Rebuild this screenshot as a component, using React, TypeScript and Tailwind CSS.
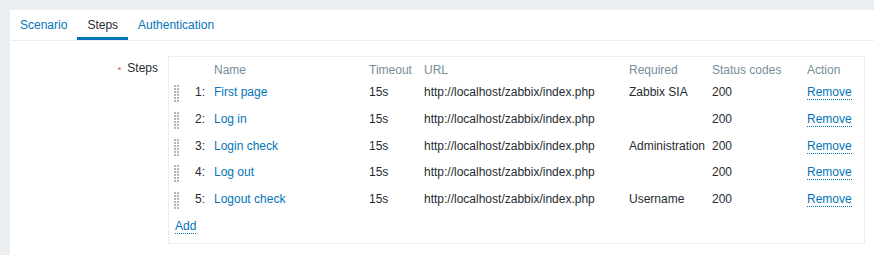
import React from "react";

const steps = [
  { no: 1, name: "First page", timeout: "15s", url: "http://localhost/zabbix/index.php", required: "Zabbix SIA", status: "200" },
  { no: 2, name: "Log in", timeout: "15s", url: "http://localhost/zabbix/index.php", required: "", status: "200" },
  { no: 3, name: "Login check", timeout: "15s", url: "http://localhost/zabbix/index.php", required: "Administration", status: "200" },
  { no: 4, name: "Log out", timeout: "15s", url: "http://localhost/zabbix/index.php", required: "", status: "200" },
  { no: 5, name: "Logout check", timeout: "15s", url: "http://localhost/zabbix/index.php", required: "Username", status: "200" },
];

const cols = "grid grid-cols-[16px_25px_155px_55px_205px_83px_95px_47px]";

const DragHandle = () => (
  <svg width="5" height="17" viewBox="0 0 5 17" className="block">
    {[0, 1, 2, 3, 4, 5].map((r) => (
      <g key={r} fill="#b0b8bd">
        <rect x="0" y={r * 3} width="2" height="2" />
        <rect x="3" y={r * 3} width="2" height="2" />
      </g>
    ))}
  </svg>
);

const App = () => {
  const tabs = ["Scenario", "Steps", "Authentication"];

  return (
    <div className="h-[255px] overflow-hidden bg-[#ebeef0] pl-[10px] pt-[10px] font-['Liberation_Sans',Arial,sans-serif] text-[12px] leading-[14px] text-[#1f2c33]">
      <div className="h-[245px] bg-white">
        {/* tab bar */}
        <div className="flex h-[31px] border-b border-[#ebeef0]">
          {tabs.map((t) => (
            <div
              key={t}
              className={
                t === "Steps"
                  ? "h-[30px] border-b-[3px] border-[#0275b8] px-[10px] pt-[8px] text-[#1f2c33]"
                  : "h-[30px] border-b-[3px] border-transparent px-[10px] pt-[8px] text-[#0275b8]"
              }
            >
              {t}
            </div>
          ))}
        </div>

        {/* form row */}
        <div className="flex gap-[10px] pt-[15px]">
          <div className="w-[148px] pt-[5px] text-right">
            <span className="mr-[6px] align-[-1px] text-[9px] text-[#e33734]">*</span>
            Steps
          </div>

          <div className="h-[188px] w-[697px] border border-[#ebeef0] pl-[4px] pr-[10px] pt-[6px]">
            <div className={`${cols} h-[15.7px] text-[#768d99]`}>
              <div />
              <div />
              <div>Name</div>
              <div>Timeout</div>
              <div>URL</div>
              <div>Required</div>
              <div>Status codes</div>
              <div>Action</div>
            </div>

            {steps.map((s) => (
              <div key={s.no} className={`${cols} h-[26.8px] items-center`}>
                <div className="pl-[1px] pt-[3px]">
                  <DragHandle />
                </div>
                <div className="pr-[9px] text-right">{s.no}:</div>
                <div className="text-[#0275b8]">{s.name}</div>
                <div>{s.timeout}</div>
                <div className="whitespace-nowrap">{s.url}</div>
                <div className="whitespace-nowrap">{s.required}</div>
                <div>{s.status}</div>
                <div>
                  <span className="border-b border-dotted border-[#0275b8] text-[#0275b8]">Remove</span>
                </div>
              </div>
            ))}

            <div className="flex h-[26.8px] items-center pl-[2px]">
              <span className="border-b border-dotted border-[#0275b8] text-[#0275b8]">Add</span>
            </div>
          </div>
        </div>
      </div>
    </div>
  );
};

export default App;
